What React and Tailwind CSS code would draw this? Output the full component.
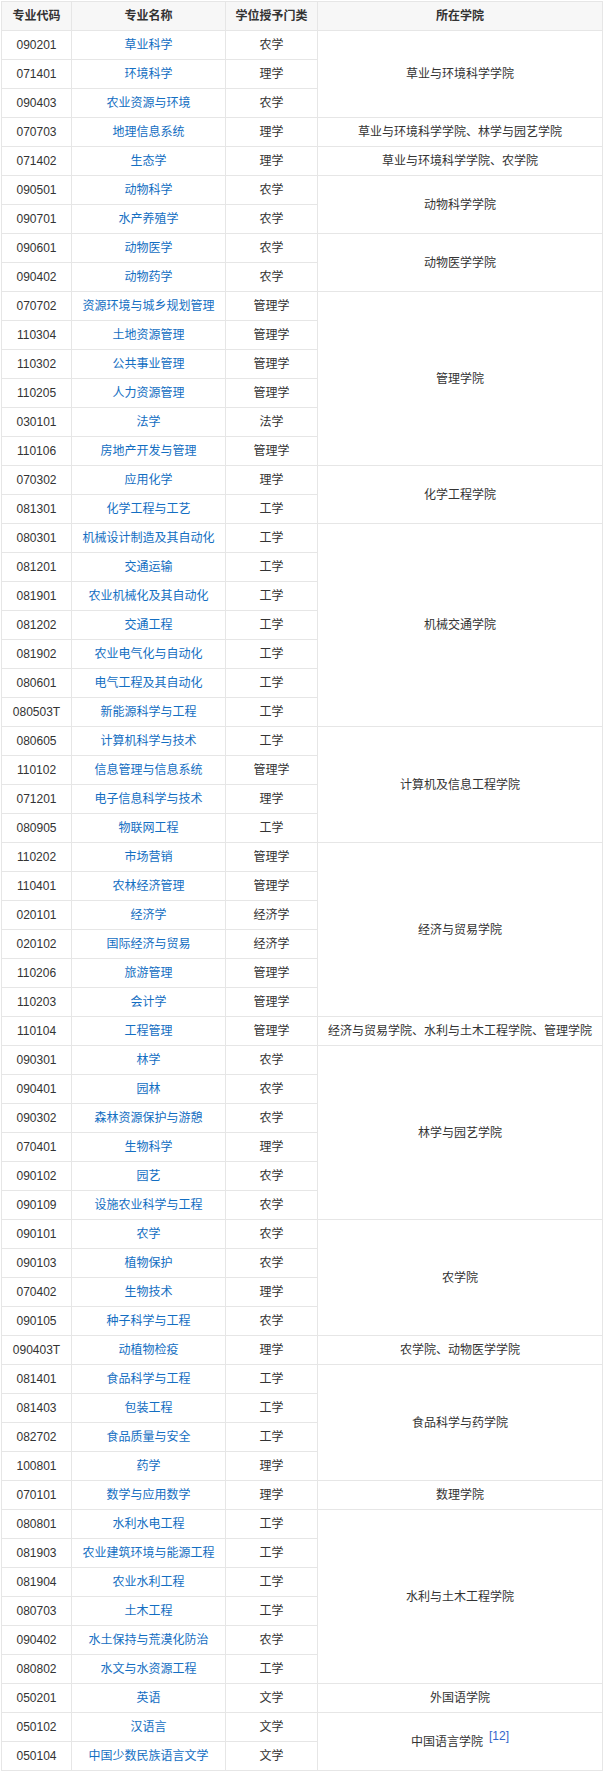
import React from "react";

// [code, name, degree, college | null (covered by rowspan), rowspan]
const rows = [
  ["090201", "草业科学", "农学", "草业与环境科学学院", 3],
  ["071401", "环境科学", "理学"],
  ["090403", "农业资源与环境", "农学"],
  ["070703", "地理信息系统", "理学", "草业与环境科学学院、林学与园艺学院", 1],
  ["071402", "生态学", "理学", "草业与环境科学学院、农学院", 1],
  ["090501", "动物科学", "农学", "动物科学学院", 2],
  ["090701", "水产养殖学", "农学"],
  ["090601", "动物医学", "农学", "动物医学学院", 2],
  ["090402", "动物药学", "农学"],
  ["070702", "资源环境与城乡规划管理", "管理学", "管理学院", 6],
  ["110304", "土地资源管理", "管理学"],
  ["110302", "公共事业管理", "管理学"],
  ["110205", "人力资源管理", "管理学"],
  ["030101", "法学", "法学"],
  ["110106", "房地产开发与管理", "管理学"],
  ["070302", "应用化学", "理学", "化学工程学院", 2],
  ["081301", "化学工程与工艺", "工学"],
  ["080301", "机械设计制造及其自动化", "工学", "机械交通学院", 7],
  ["081201", "交通运输", "工学"],
  ["081901", "农业机械化及其自动化", "工学"],
  ["081202", "交通工程", "工学"],
  ["081902", "农业电气化与自动化", "工学"],
  ["080601", "电气工程及其自动化", "工学"],
  ["080503T", "新能源科学与工程", "工学"],
  ["080605", "计算机科学与技术", "工学", "计算机及信息工程学院", 4],
  ["110102", "信息管理与信息系统", "管理学"],
  ["071201", "电子信息科学与技术", "理学"],
  ["080905", "物联网工程", "工学"],
  ["110202", "市场营销", "管理学", "经济与贸易学院", 6],
  ["110401", "农林经济管理", "管理学"],
  ["020101", "经济学", "经济学"],
  ["020102", "国际经济与贸易", "经济学"],
  ["110206", "旅游管理", "管理学"],
  ["110203", "会计学", "管理学"],
  ["110104", "工程管理", "管理学", "经济与贸易学院、水利与土木工程学院、管理学院", 1],
  ["090301", "林学", "农学", "林学与园艺学院", 6],
  ["090401", "园林", "农学"],
  ["090302", "森林资源保护与游憩", "农学"],
  ["070401", "生物科学", "理学"],
  ["090102", "园艺", "农学"],
  ["090109", "设施农业科学与工程", "农学"],
  ["090101", "农学", "农学", "农学院", 4],
  ["090103", "植物保护", "农学"],
  ["070402", "生物技术", "理学"],
  ["090105", "种子科学与工程", "农学"],
  ["090403T", "动植物检疫", "理学", "农学院、动物医学学院", 1],
  ["081401", "食品科学与工程", "工学", "食品科学与药学院", 4],
  ["081403", "包装工程", "工学"],
  ["082702", "食品质量与安全", "工学"],
  ["100801", "药学", "理学"],
  ["070101", "数学与应用数学", "理学", "数理学院", 1],
  ["080801", "水利水电工程", "工学", "水利与土木工程学院", 6],
  ["081903", "农业建筑环境与能源工程", "工学"],
  ["081904", "农业水利工程", "工学"],
  ["080703", "土木工程", "工学"],
  ["090402", "水土保持与荒漠化防治", "农学"],
  ["080802", "水文与水资源工程", "工学"],
  ["050201", "英语", "文学", "外国语学院", 1],
  ["050102", "汉语言", "文学", "中国语言学院", 2, true],
  ["050104", "中国少数民族语言文学", "文学"],
];

const cell = "border border-[#e6e6e6] text-center align-middle px-1 p-0";

export default function App() {
  return (
    <div
      className="w-[604px] bg-white pl-[1px] pt-[1px] text-[12px] leading-[16px] text-[#333]"
      style={{ fontFamily: '"Liberation Sans", "Noto Sans CJK SC", sans-serif' }}
    >
      <table className="w-[602px] border-collapse table-fixed">
        <colgroup>
          <col className="w-[70px]" />
          <col className="w-[154px]" />
          <col className="w-[92px]" />
          <col />
        </colgroup>
        <thead>
          <tr className="h-[29px] bg-[#f7f7f7]">
            <th className={`${cell} font-bold`}>专业代码</th>
            <th className={`${cell} font-bold`}>专业名称</th>
            <th className={`${cell} font-bold`}>学位授予门类</th>
            <th className={`${cell} font-bold`}>所在学院</th>
          </tr>
        </thead>
        <tbody>
          {rows.map(([code, name, degree, college, span, note], i) => (
            <tr key={i} className="h-[29px]">
              <td className={cell}>{code}</td>
              <td className={`${cell} text-[#136ec2]`}>{name}</td>
              <td className={cell}>{degree}</td>
              {college && (
                <td className={`${cell} whitespace-nowrap`} rowSpan={span}>
                  {college}
                  {note && (
                    <sup className="ml-[6px] relative -top-[6px] text-[12px] text-[#3366cc]">[12]</sup>
                  )}
                </td>
              )}
            </tr>
          ))}
        </tbody>
      </table>
    </div>
  );
}
